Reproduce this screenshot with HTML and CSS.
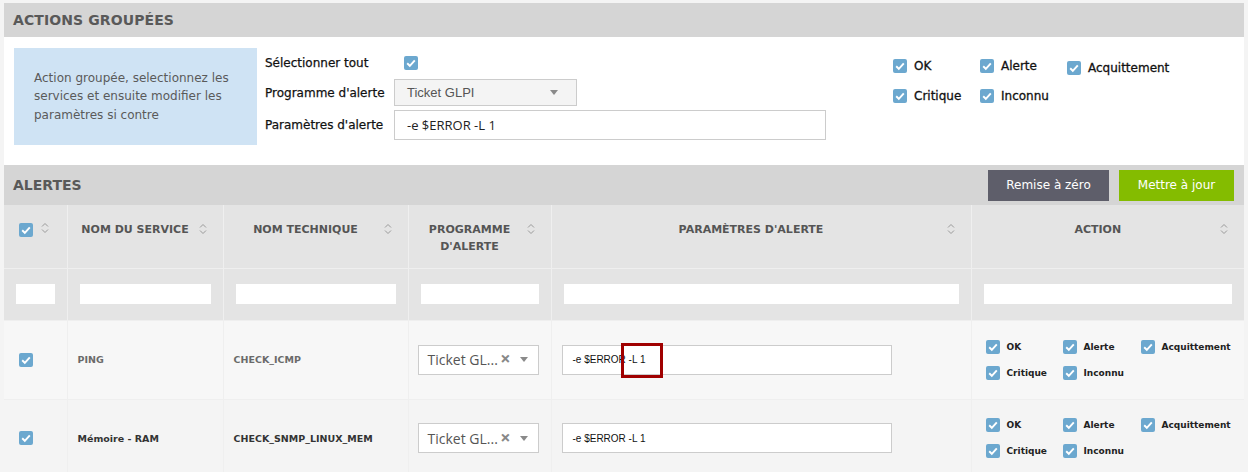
FILE: index.html
```html
<!DOCTYPE html>
<html lang="fr">
<head>
<meta charset="utf-8">
<title>Alertes</title>
<link rel="stylesheet" href="styles.css">
</head>
<body>
<div class="page">
  <section class="panel">
    <div class="panel-head">ACTIONS GROUPÉES</div>
    <div class="bulk">
      <div class="info">Action groupée, selectionnez les services et ensuite modifier les paramètres si contre</div>
      <div class="bulk-form">
        <div class="label">Sélectionner tout</div>
        <div class="field"><svg class="cb cb-all" viewBox="0 0 14 14"><rect width="14" height="14" rx="2" fill="#6ca8cf"/><path d="M3.2 7.3 L5.8 9.8 L10.8 4.3" fill="none" stroke="#fff" stroke-width="1.9"/></svg></div>
        <div class="label">Programme d'alerte</div>
        <div class="field"><div class="select-top"><span>Ticket GLPI</span><span class="tri"></span></div></div>
        <div class="label">Paramètres d'alerte</div>
        <div class="field"><div class="input-top">-e $ERROR -L 1</div></div>
      </div>
      <div class="bulk-checks">
        <label class="chk"><svg class="cb" viewBox="0 0 14 14"><rect width="14" height="14" rx="2" fill="#6ca8cf"/><path d="M3.2 7.3 L5.8 9.8 L10.8 4.3" fill="none" stroke="#fff" stroke-width="1.9"/></svg>OK</label>
        <label class="chk"><svg class="cb" viewBox="0 0 14 14"><rect width="14" height="14" rx="2" fill="#6ca8cf"/><path d="M3.2 7.3 L5.8 9.8 L10.8 4.3" fill="none" stroke="#fff" stroke-width="1.9"/></svg>Alerte</label>
        <label class="chk chk-low"><svg class="cb" viewBox="0 0 14 14"><rect width="14" height="14" rx="2" fill="#6ca8cf"/><path d="M3.2 7.3 L5.8 9.8 L10.8 4.3" fill="none" stroke="#fff" stroke-width="1.9"/></svg>Acquittement</label>
        <label class="chk"><svg class="cb" viewBox="0 0 14 14"><rect width="14" height="14" rx="2" fill="#6ca8cf"/><path d="M3.2 7.3 L5.8 9.8 L10.8 4.3" fill="none" stroke="#fff" stroke-width="1.9"/></svg>Critique</label>
        <label class="chk"><svg class="cb" viewBox="0 0 14 14"><rect width="14" height="14" rx="2" fill="#6ca8cf"/><path d="M3.2 7.3 L5.8 9.8 L10.8 4.3" fill="none" stroke="#fff" stroke-width="1.9"/></svg>Inconnu</label>
      </div>
    </div>
  </section>

  <section class="panel alerts">
    <div class="alerts-head">
      <span class="alerts-title">ALERTES</span>
      <div class="btns">
        <button class="btn btn-reset">Remise à zéro</button>
        <button class="btn btn-update">Mettre à jour</button>
      </div>
    </div>
    <table class="grid">
      <colgroup>
        <col class="c1"><col class="c2"><col class="c3"><col class="c4"><col class="c5"><col class="c6">
      </colgroup>
      <thead>
        <tr class="head-row">
          <th class="th-check"><svg class="cb" viewBox="0 0 14 14"><rect width="14" height="14" rx="2" fill="#6ca8cf"/><path d="M3.2 7.3 L5.8 9.8 L10.8 4.3" fill="none" stroke="#fff" stroke-width="1.9"/></svg><svg class="sort" viewBox="0 0 8 12"><path d="M1 4.5 L4 1.5 L7 4.5 M1 7.5 L4 10.5 L7 7.5" fill="none" stroke="#9a9a9a" stroke-width="1"/></svg></th>
          <th>NOM DU SERVICE<svg class="sort" viewBox="0 0 8 12"><path d="M1 4.5 L4 1.5 L7 4.5 M1 7.5 L4 10.5 L7 7.5" fill="none" stroke="#9a9a9a" stroke-width="1"/></svg></th>
          <th>NOM TECHNIQUE<svg class="sort" viewBox="0 0 8 12"><path d="M1 4.5 L4 1.5 L7 4.5 M1 7.5 L4 10.5 L7 7.5" fill="none" stroke="#9a9a9a" stroke-width="1"/></svg></th>
          <th>PROGRAMME D'ALERTE<svg class="sort" viewBox="0 0 8 12"><path d="M1 4.5 L4 1.5 L7 4.5 M1 7.5 L4 10.5 L7 7.5" fill="none" stroke="#9a9a9a" stroke-width="1"/></svg></th>
          <th>PARAMÈTRES D'ALERTE<svg class="sort" viewBox="0 0 8 12"><path d="M1 4.5 L4 1.5 L7 4.5 M1 7.5 L4 10.5 L7 7.5" fill="none" stroke="#9a9a9a" stroke-width="1"/></svg></th>
          <th>ACTION<svg class="sort" viewBox="0 0 8 12"><path d="M1 4.5 L4 1.5 L7 4.5 M1 7.5 L4 10.5 L7 7.5" fill="none" stroke="#9a9a9a" stroke-width="1"/></svg></th>
        </tr>
        <tr class="filter-row">
          <td><div class="filter"></div></td>
          <td><div class="filter"></div></td>
          <td><div class="filter"></div></td>
          <td><div class="filter"></div></td>
          <td><div class="filter"></div></td>
          <td><div class="filter"></div></td>
        </tr>
      </thead>
      <tbody>
        <tr class="row row-a">
          <td class="td-check"><svg class="cb" viewBox="0 0 14 14"><rect width="14" height="14" rx="2" fill="#6ca8cf"/><path d="M3.2 7.3 L5.8 9.8 L10.8 4.3" fill="none" stroke="#fff" stroke-width="1.9"/></svg></td>
          <td class="txt">PING</td>
          <td class="txt">CHECK_ICMP</td>
          <td class="td-select"><div class="select-row"><span class="sel-text">Ticket GL...</span><span class="sel-x">×</span><span class="tri"></span></div></td>
          <td class="td-input"><div class="input-row">-e $ERROR -L 1<span class="mark"></span></div></td>
          <td class="td-action">
            <div class="row-checks">
              <label class="rchk"><svg class="cb" viewBox="0 0 14 14"><rect width="14" height="14" rx="2" fill="#6ca8cf"/><path d="M3.2 7.3 L5.8 9.8 L10.8 4.3" fill="none" stroke="#fff" stroke-width="1.9"/></svg>OK</label>
              <label class="rchk"><svg class="cb" viewBox="0 0 14 14"><rect width="14" height="14" rx="2" fill="#6ca8cf"/><path d="M3.2 7.3 L5.8 9.8 L10.8 4.3" fill="none" stroke="#fff" stroke-width="1.9"/></svg>Alerte</label>
              <label class="rchk"><svg class="cb" viewBox="0 0 14 14"><rect width="14" height="14" rx="2" fill="#6ca8cf"/><path d="M3.2 7.3 L5.8 9.8 L10.8 4.3" fill="none" stroke="#fff" stroke-width="1.9"/></svg>Acquittement</label>
              <label class="rchk"><svg class="cb" viewBox="0 0 14 14"><rect width="14" height="14" rx="2" fill="#6ca8cf"/><path d="M3.2 7.3 L5.8 9.8 L10.8 4.3" fill="none" stroke="#fff" stroke-width="1.9"/></svg>Critique</label>
              <label class="rchk"><svg class="cb" viewBox="0 0 14 14"><rect width="14" height="14" rx="2" fill="#6ca8cf"/><path d="M3.2 7.3 L5.8 9.8 L10.8 4.3" fill="none" stroke="#fff" stroke-width="1.9"/></svg>Inconnu</label>
            </div>
          </td>
        </tr>
        <tr class="row row-b">
          <td class="td-check"><svg class="cb" viewBox="0 0 14 14"><rect width="14" height="14" rx="2" fill="#6ca8cf"/><path d="M3.2 7.3 L5.8 9.8 L10.8 4.3" fill="none" stroke="#fff" stroke-width="1.9"/></svg></td>
          <td class="txt">Mémoire - RAM</td>
          <td class="txt">CHECK_SNMP_LINUX_MEM</td>
          <td class="td-select"><div class="select-row"><span class="sel-text">Ticket GL...</span><span class="sel-x">×</span><span class="tri"></span></div></td>
          <td class="td-input"><div class="input-row">-e $ERROR -L 1</div></td>
          <td class="td-action">
            <div class="row-checks">
              <label class="rchk"><svg class="cb" viewBox="0 0 14 14"><rect width="14" height="14" rx="2" fill="#6ca8cf"/><path d="M3.2 7.3 L5.8 9.8 L10.8 4.3" fill="none" stroke="#fff" stroke-width="1.9"/></svg>OK</label>
              <label class="rchk"><svg class="cb" viewBox="0 0 14 14"><rect width="14" height="14" rx="2" fill="#6ca8cf"/><path d="M3.2 7.3 L5.8 9.8 L10.8 4.3" fill="none" stroke="#fff" stroke-width="1.9"/></svg>Alerte</label>
              <label class="rchk"><svg class="cb" viewBox="0 0 14 14"><rect width="14" height="14" rx="2" fill="#6ca8cf"/><path d="M3.2 7.3 L5.8 9.8 L10.8 4.3" fill="none" stroke="#fff" stroke-width="1.9"/></svg>Acquittement</label>
              <label class="rchk"><svg class="cb" viewBox="0 0 14 14"><rect width="14" height="14" rx="2" fill="#6ca8cf"/><path d="M3.2 7.3 L5.8 9.8 L10.8 4.3" fill="none" stroke="#fff" stroke-width="1.9"/></svg>Critique</label>
              <label class="rchk"><svg class="cb" viewBox="0 0 14 14"><rect width="14" height="14" rx="2" fill="#6ca8cf"/><path d="M3.2 7.3 L5.8 9.8 L10.8 4.3" fill="none" stroke="#fff" stroke-width="1.9"/></svg>Inconnu</label>
            </div>
          </td>
        </tr>
      </tbody>
    </table>
  </section>
</div>
</body>
</html>
```
FILE: styles.css
```css
* { box-sizing: border-box; }
html, body { margin: 0; padding: 0; }
body {
  background: #f4f4f4;
  font-family: "DejaVu Sans", "Noto Sans", sans-serif;
  color: #333;
  overflow: hidden;
}
.page { padding: 3px 4px 0 4px; width: 1248px; }

.panel { background: #fff; }
.panel-head {
  height: 34px;
  background: #d5d5d5;
  padding-left: 9px;
  display: flex;
  align-items: center;
  font-size: 14px;
  font-weight: 600;
  color: #595959;
  letter-spacing: 0.1px;
}

.bulk {
  height: 128px;
  display: flex;
  align-items: flex-start;
  padding: 11px 10px 0 10px;
}
.info {
  width: 243px;
  height: 97px;
  background: #cfe3f4;
  color: #5a5a5a;
  font-size: 12px;
  line-height: 18.5px;
  padding: 0 12px 0 20px;
  display: flex;
  align-items: center;
}
.bulk-form {
  margin-left: 8px;
  margin-top: 3px;
  display: grid;
  grid-template-columns: 129px 433px;
  grid-template-rows: 24px 27px 30px;
  row-gap: 4px;
}
.label {
  display: flex;
  align-items: center;
  font-size: 12px;
  font-weight: normal;
  color: #111;
  white-space: nowrap;
  -webkit-text-stroke: 0.25px #111;
}
.field { display: flex; align-items: center; }
.cb { width: 14px; height: 14px; display: block; flex: none; }
.cb-all { margin-left: 10px; }
.select-top {
  width: 183px;
  height: 27px;
  background: #f4f4f4;
  border: 1px solid #cccccc;
  display: flex;
  align-items: center;
  justify-content: space-between;
  padding: 0 18px 0 12px;
  font-family: "Liberation Sans", Arial, sans-serif;
  font-size: 13px;
  color: #555;
}
.tri {
  width: 0; height: 0;
  border-left: 4px solid transparent;
  border-right: 4px solid transparent;
  border-top: 5px solid #8a8a8a;
}
.input-top {
  width: 432px;
  height: 30px;
  border: 1px solid #cccccc;
  background: #fff;
  display: flex;
  align-items: center;
  padding-left: 12px;
  font-family: "Open Sans", sans-serif;
  font-size: 13px;
  color: #222;
}

.bulk-checks {
  margin-left: 66px;
  margin-top: 11px;
  display: grid;
  grid-template-columns: 87px 87px auto;
  row-gap: 14px;
}
.chk {
  display: flex;
  align-items: center;
  gap: 7px;
  font-size: 12px;
  font-weight: normal;
  color: #111;
  height: 14px;
  white-space: nowrap;
  -webkit-text-stroke: 0.3px #111;
}
.chk-low { margin-top: 2px; }

.alerts { margin-top: 0; background: #f4f4f4; }
.alerts-head {
  height: 40px;
  background: #d5d5d5;
  display: flex;
  align-items: center;
  justify-content: space-between;
  padding: 0 10px 0 9px;
}
.alerts-title { font-size: 14px; font-weight: 600; color: #595959; }
.btns { display: flex; gap: 10px; }
.btn {
  height: 31px;
  border: 0;
  color: #fff;
  font-family: "DejaVu Sans", sans-serif;
  font-size: 12px;
  padding: 0;
}
.btn-reset { background: #5e5e6a; width: 121px; }
.btn-update { background: #84bc00; width: 115px; }

.grid {
  width: 1240px;
  table-layout: fixed;
  border-collapse: collapse;
}
.c1 { width: 63px; }
.c2 { width: 156px; }
.c3 { width: 185px; }
.c4 { width: 143px; }
.c5 { width: 420px; }
.c6 { width: 273px; }
.grid th, .grid td {
  border: 1px solid #efefef;
}
.grid tr:first-child th { border-top: 0; }
.grid th:first-child, .grid td:first-child { border-left: 0; }
.grid th:last-child, .grid td:last-child { border-right: 0; }

.head-row { height: 63px; background: #e4e4e4; }
.head-row th {
  position: relative;
  vertical-align: top;
  text-align: center;
  padding: 16px 30px 0 10px;
  font-size: 11px;
  font-weight: 700;
  line-height: 17px;
  color: #555;
}
.head-row .th-check { padding: 18px 0 0 15px; text-align: left; }
.sort {
  position: absolute;
  right: 16px;
  top: 18px;
  width: 8px;
  height: 12px;
}
.th-check .sort { right: auto; left: 37px; top: 17px; }

.filter-row { height: 52px; background: #e4e4e4; }
.filter-row td { padding: 0 12px; vertical-align: middle; }
.filter { height: 20px; background: #fff; }

.row { height: 79px; }
.row-a { background: #f7f7f7; }
.row-b { background: #f4f4f4; height: 78px; }
.row td { vertical-align: middle; }
.td-check { padding-left: 15px; }
.txt { padding-left: 10px; font-size: 9.5px; font-weight: 600; }
.row-a .txt { color: #6a6a6a; }
.row-b .txt { color: #333; }

.td-select { padding: 0 11px 0 9px; }
.select-row {
  height: 30px;
  width: 121px;
  background: #fff;
  border: 1px solid #cccccc;
  display: flex;
  align-items: center;
  padding: 0 10px 0 9px;
  font-family: "Open Sans", sans-serif;
  font-size: 14px;
  color: #555;
}
.sel-text { flex: 1; white-space: nowrap; }
.sel-x { font-weight: 700; color: #888; font-size: 18px; margin-right: 9px; line-height: 1; margin-top: -3px; }

.td-input { padding-left: 10px; }
.input-row {
  position: relative;
  width: 330px;
  height: 30px;
  background: #fff;
  border: 1px solid #cccccc;
  display: flex;
  align-items: center;
  padding-left: 10px;
  font-family: "Liberation Sans", Arial, sans-serif;
  font-size: 10px;
  color: #111;
}
.mark {
  position: absolute;
  left: 58px;
  top: -3px;
  width: 42px;
  height: 35px;
  border: 3px solid #a00000;
}

.td-action { padding-left: 14px; }
.row-checks {
  display: grid;
  grid-template-columns: 77px 78px auto;
  row-gap: 12px;
}
.rchk {
  display: flex;
  align-items: center;
  gap: 7px;
  font-size: 9px;
  font-weight: 600;
  color: #222;
  height: 14px;
  white-space: nowrap;
}
```
